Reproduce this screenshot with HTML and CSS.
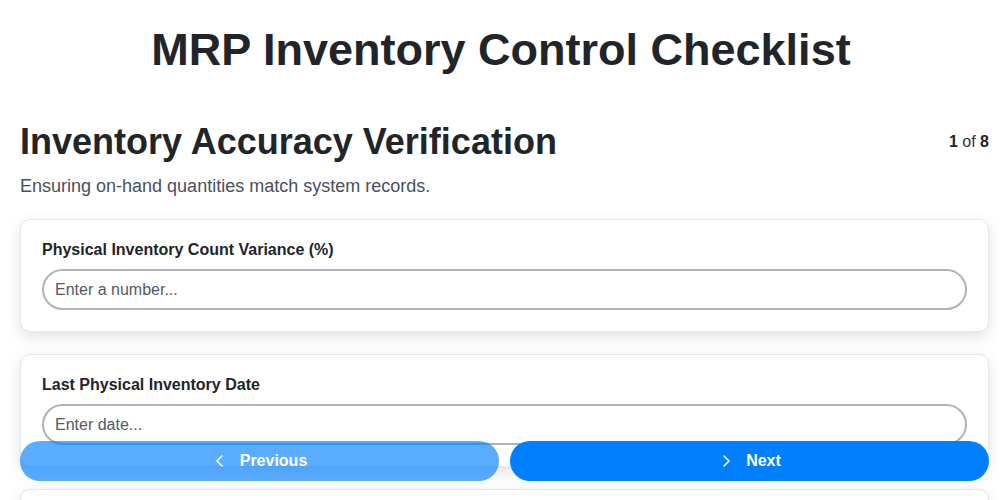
FILE: index.html
```html
<!DOCTYPE html>
<html lang="en">
<head>
    <meta charset="UTF-8">
    <meta name="viewport" content="width=device-width, initial-scale=1.0">
    <title>MRP Inventory Control Checklist</title>
    <link rel="stylesheet" href="styles.css">
</head>
<body>
    <div class="page">
        <h1 class="title">MRP Inventory Control Checklist</h1>
        <div class="section_head">
            <h2 class="section_title">Inventory Accuracy Verification</h2>
            <div class="step"><b>1</b> of <b>8</b></div>
        </div>
        <p class="section_desc">Ensuring on-hand quantities match system records.</p>

        <div class="card">
            <label class="field_label">Physical Inventory Count Variance (%)</label>
            <input class="field_input" type="text" placeholder="Enter a number...">
        </div>
        <div class="card">
            <label class="field_label">Last Physical Inventory Date</label>
            <input class="field_input" type="text" placeholder="Enter date...">
        </div>
        <div class="card">
            <label class="field_label">Cycle Count Frequency</label>
            <input class="field_input" type="text" placeholder="Enter text...">
        </div>
    </div>
    <div class="nav">
        <button class="nav_btn prev" disabled>
            <svg width="16" height="16" viewBox="0 0 16 16"><path d="M10 3 L5 8 L10 13" fill="none" stroke="#fff" stroke-width="1.6" stroke-linecap="round" stroke-linejoin="round"/></svg>
            Previous
        </button>
        <button class="nav_btn next">
            <svg width="16" height="16" viewBox="0 0 16 16"><path d="M6 3 L11 8 L6 13" fill="none" stroke="#fff" stroke-width="1.6" stroke-linecap="round" stroke-linejoin="round"/></svg>
            Next
        </button>
    </div>
</body>
</html>
```

FILE: styles.css
```css
*{
    margin: 0;
    padding: 0;
    box-sizing: border-box;
    font-family: "Liberation Sans", Arial, sans-serif;
}
body{
    background: #fff;
    color: #212529;
}
.page{
    padding: 0 11px 40px 20px;
}
.title{
    text-align: center;
    font-size: 45px;
    font-weight: 700;
    line-height: 54px;
    padding-top: 23px;
    margin-left: -7px;
}
.section_head{
    display: flex;
    justify-content: space-between;
    align-items: center;
    margin-top: 44px;
}
.section_title{
    font-size: 36px;
    font-weight: 700;
    line-height: 42px;
}
.step{
    font-size: 16px;
    color: #333;
}
.step b{
    color: #212529;
}
.section_desc{
    font-size: 18px;
    color: #495060;
    margin-top: 12px;
    line-height: 22px;
}
.card{
    background: #fff;
    border: 1px solid #e6e6eb;
    border-radius: 10px;
    padding: 20px 21px 21px;
    margin-top: 22px;
    box-shadow: 0 5px 15px rgba(0, 0, 0, 0.12);
}
.card:first-of-type{
    margin-top: 23px;
}
.field_label{
    display: block;
    font-size: 16px;
    font-weight: 700;
    line-height: 19px;
    margin-bottom: 10px;
}
.field_input{
    display: block;
    width: 100%;
    height: 41px;
    border: 2px solid #adb3bb;
    border-radius: 21px;
    padding: 0 11px;
    font-size: 16px;
    color: #212529;
    background: #fff;
    outline: none;
}
.field_input::placeholder{
    color: #555a64;
}
.nav{
    position: fixed;
    left: 20px;
    right: 11px;
    bottom: 19px;
    display: flex;
    gap: 11px;
}
.nav_btn{
    flex: 1;
    height: 40px;
    border: none;
    border-radius: 20px;
    background: #0080ff;
    color: #fff;
    font-size: 16px;
    font-weight: 700;
    display: flex;
    justify-content: center;
    align-items: center;
    gap: 12px;
    cursor: pointer;
}
.nav_btn.prev{
    opacity: 0.65;
    cursor: default;
}
```
